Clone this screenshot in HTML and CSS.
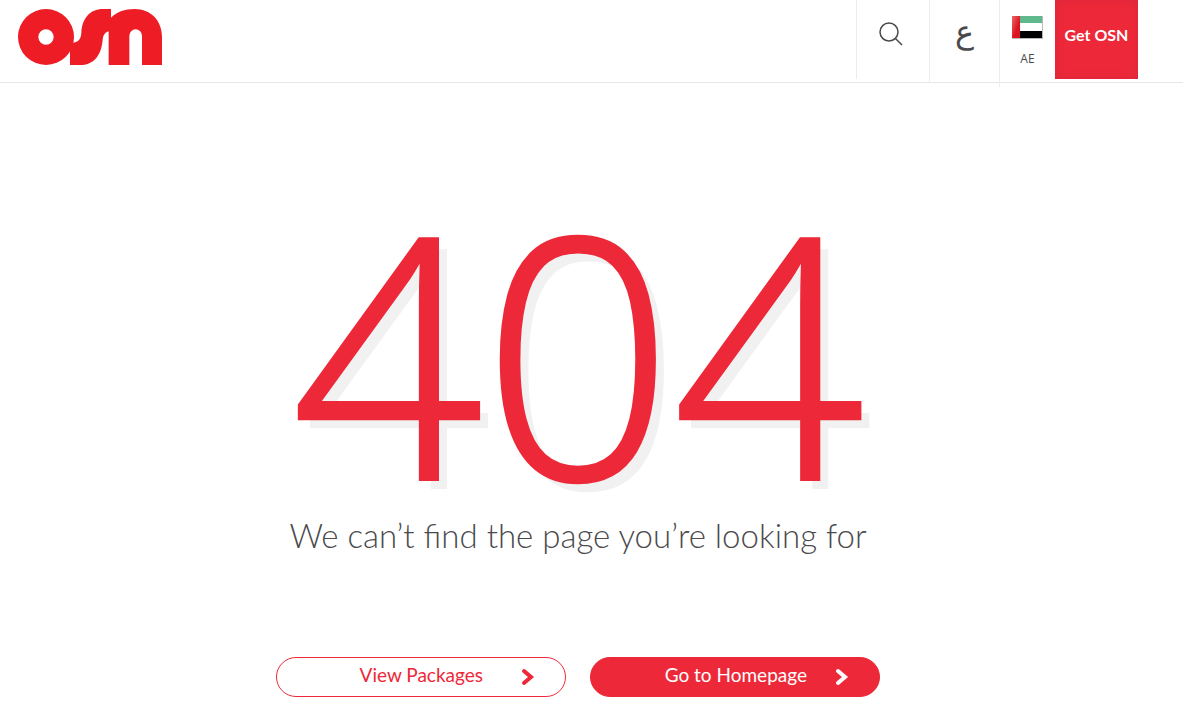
FILE: index.html
```html
<!DOCTYPE html>
<html lang="en">
<head>
  <meta charset="UTF-8" />
  <meta name="viewport" content="width=device-width, initial-scale=1" />
  <title>Page not found - OSN</title>
  <link rel="stylesheet" href="styles.css">
</head>
<body>
  <header class="header">
    <a class="logo" href="/" aria-label="OSN">
      <svg viewBox="0 0 432 168" width="144" height="56" aria-hidden="true">
        <path fill-rule="evenodd" d="M84 0a84 84 0 1 0 0 168a84 84 0 1 0 0-168zM84 61a23 23 0 1 1 0 46a23 23 0 1 1 0-46z"/>
        <path d="M156 168V102C178 103 189 92 190 72C192 28 216 0 255 0H279V66C262 67 256 76 254 92C250 142 225 168 186 168z"/>
        <path d="M272 168V66L279 26C298 8 320 0 350 0C400 0 432 36 432 84V168H372V80a19 19 0 0 0-38 0V168z"/>
      </svg>
    </a>
    <nav class="tools">
      <button class="tool search" type="button" aria-label="Search">
        <svg viewBox="0 0 24 24" width="24" height="24" aria-hidden="true">
          <circle cx="10" cy="10" r="9"/>
          <path d="M16 16l7 7"/>
        </svg>
      </button>
      <a class="tool language" href="/ar" lang="ar">ع</a>
      <a class="tool country" href="/country">
        <svg class="flag" viewBox="0 0 32 24" width="32" height="24" aria-hidden="true">
          <defs>
            <linearGradient id="shine" x1="0" y1="0" x2="1" y2="1">
              <stop offset="0" stop-color="#ec6a6a"/>
              <stop offset="0.6" stop-color="#dc1420"/>
            </linearGradient>
          </defs>
          <path fill="#b8b8b8" d="M0 1h31v23H0z"/>
          <path fill="#5fb98c" d="M0 1h30v7H0z"/>
          <path fill="#fff" d="M0 8h30v8H0z"/>
          <path fill="#000" d="M0 16h30v7H0z"/>
          <path fill="url(#shine)" d="M0 1h8v22H0z"/>
        </svg>
        <span>AE</span>
      </a>
      <a class="get-osn" href="/subscribe">Get OSN</a>
    </nav>
  </header>

  <main class="not-found">
    <h1>404</h1>
    <p>We can’t find the page you’re looking for</p>
    <div class="actions">
      <a class="btn" href="/packages">
        View Packages
        <svg viewBox="0 0 14 18" width="14" height="18" aria-hidden="true"><path d="M3 3l7 6l-7 6"/></svg>
      </a>
      <a class="btn btn-primary" href="/">
        Go to Homepage
        <svg viewBox="0 0 14 18" width="14" height="18" aria-hidden="true"><path d="M3 3l7 6l-7 6"/></svg>
      </a>
    </div>
  </main>
</body>
</html>
```
FILE: styles.css
```css
* {
  box-sizing: border-box;
}
body {
  margin: 0;
  font-family: Lato, "Noto Sans", sans-serif;
  color: #4a4a4c;
  background: #fff;
}
a {
  text-decoration: none;
}
.header {
  display: flex;
  justify-content: space-between;
  align-items: flex-start;
  height: 83px;
  padding: 0 45px 0 18px;
  border-bottom: 1px solid #e6e6e6;
}
.logo {
  padding-top: 9px;
}
.logo svg {
  display: block;
  fill: #ee1c25;
}
.tools {
  display: flex;
  height: 79px;
}
.tool {
  display: flex;
  flex-direction: column;
  align-items: center;
  border: none;
  border-left: 1px solid #ececec;
  background: none;
  color: #4a4a4c;
}
.search {
  width: 73px;
  padding: 22px 4px 0 0;
  cursor: pointer;
}
.search svg {
  fill: none;
  stroke: #4a4a4c;
  stroke-width: 1.5;
}
.language {
  width: 70px;
  height: 82px;
  padding-top: 12px;
  font-family: "DejaVu Sans", sans-serif;
  font-size: 32px;
  font-weight: 200;
  line-height: 40px;
}
.country {
  width: 56px;
  height: 87px;
  padding-top: 15px;
  font-family: "Open Sans", sans-serif;
  font-size: 12px;
  line-height: 16px;
}
.country span {
  padding-top: 12px;
}
.get-osn {
  width: 83px;
  background: #ed2939;
  box-shadow: inset 0 0 10px #d9273a;
  color: #fff;
  font-size: 16px;
  font-weight: bold;
  line-height: 70px;
  text-align: center;
}
.not-found {
  padding: 122px 27px 0 0;
  text-align: center;
}
h1 {
  margin: 0;
  color: #ed2939;
  font-family: "Open Sans", sans-serif;
  font-size: 334px;
  font-weight: 300;
  line-height: 290px;
  text-shadow: 10px 10px 0 #f1f1f1;
  -webkit-text-stroke: 4px #ed2939;
}
p {
  margin: 20px 0 0;
  font-size: 33px;
  font-weight: 300;
  line-height: 40px;
}
.actions {
  display: flex;
  justify-content: center;
  gap: 24px;
  padding: 102px 0 11px;
}
.btn {
  display: flex;
  justify-content: flex-end;
  gap: 38px;
  width: 290px;
  height: 40px;
  padding: 0 30px 0 0;
  border: 1px solid #ed2939;
  border-radius: 20px;
  color: #ed2939;
  font-size: 19px;
  line-height: 34px;
}
.btn svg {
  align-self: center;
  fill: none;
  stroke: currentColor;
  stroke-width: 4;
  stroke-linecap: round;
}
.btn-primary {
  gap: 28px;
  background: #ed2939;
  color: #fff;
}
```
